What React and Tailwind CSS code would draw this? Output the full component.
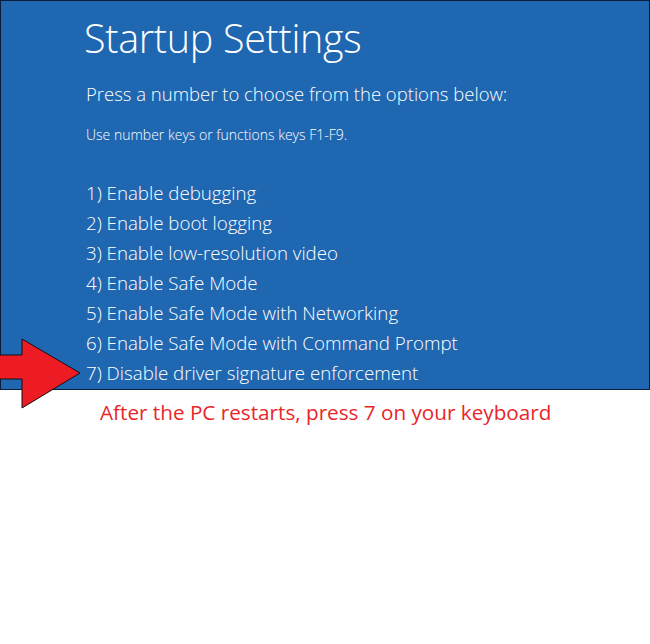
const options = [
  "1) Enable debugging",
  "2) Enable boot logging",
  "3) Enable low-resolution video",
  "4) Enable Safe Mode",
  "5) Enable Safe Mode with Networking",
  "6) Enable Safe Mode with Command Prompt",
  "7) Disable driver signature enforcement",
];

function Arrow() {
  return (
    <svg className="absolute left-0 top-[338px]" width="84" height="72" viewBox="0 0 84 72">
      <polygon
        points="-2,17 22,17 22,1 80,35 22,70 22,41 -2,41"
        fill="#ed1c24"
        stroke="#111"
        strokeWidth="1"
      />
    </svg>
  );
}

export default function App() {
  return (
    <div className="relative w-[650px] h-[644px] bg-white overflow-hidden font-['Open_Sans',sans-serif]">
      <div className="h-[390px] w-[650px] bg-[#2067b2] border border-[#0c1d3a] text-white pl-[83px] pt-[9px]">
        <h1 className="text-[39.5px] font-light leading-[56px] tracking-[-0.3px]">Startup Settings</h1>
        <p className="mt-[15px] ml-[2px] text-[18.5px] font-light leading-[26px]">
          Press a number to choose from the options below:
        </p>
        <p className="mt-[19px] ml-[2px] text-[14px] font-light leading-[18px]">
          Use number keys or functions keys F1-F9.
        </p>
        <ul className="mt-[34px] ml-[2px] flex flex-col">
          {options.map((o) => (
            <li key={o} className="text-[18.7px] font-light leading-[30px]">
              {o}
            </li>
          ))}
        </ul>
      </div>
      <Arrow />
      <p className="pl-[100px] pt-[8px] text-[20.7px] leading-[28px] text-[#e8262a]">
        After the PC restarts, press 7 on your keyboard
      </p>
    </div>
  );
}
